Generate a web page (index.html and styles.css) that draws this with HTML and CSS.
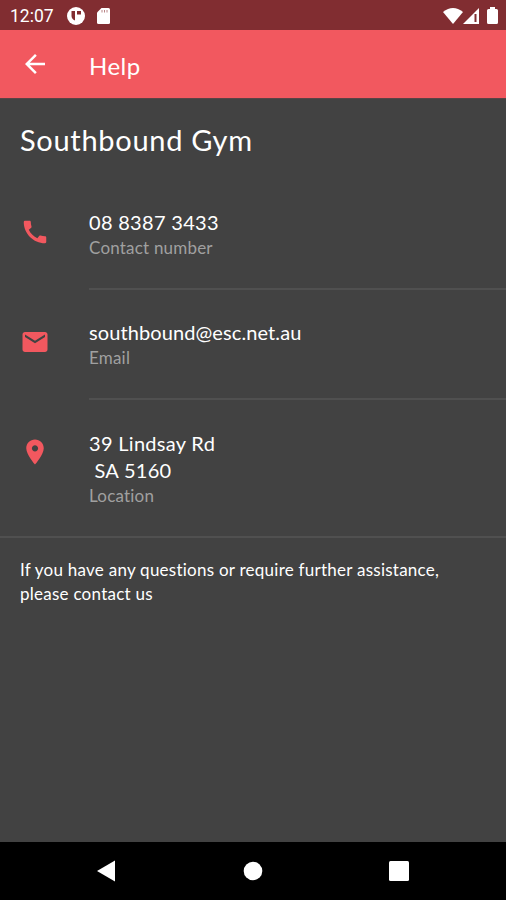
FILE: index.html
```html
<!DOCTYPE html>
<html lang="en">
	<head>
		<meta charset="UTF-8">
		<meta name="viewport" content="width=device-width, initial-scale=1.0">
		<title>Help</title>
		<link rel="stylesheet" href="styles.css">
	</head>
	<body>
		<div class="status-bar">
			<span class="status-time">12:07</span>
			<svg class="status-app" viewBox="0 0 18 18">
				<circle cx="9" cy="9" r="9" fill="#fff"/>
				<path d="M4.500 4h3.500v9.500a5 5 0 0 1-3.500-4.500z M10 4h4v3.500h-4z" fill="#812d31"/>
			</svg>
			<svg class="status-card" viewBox="0 0 13 16">
				<path d="M4.500 0H11.500a1.500 1.500 0 0 1 1.500 1.500v13a1.500 1.500 0 0 1-1.500 1.500h-10A1.500 1.500 0 0 1 0 14.500V4.500z" fill="#fff"/>
				<path d="M5 2v2.500M7.500 2v2.500M10 2v2.500" stroke="#b98486" stroke-width="1"/>
			</svg>
			<svg class="status-wifi" viewBox="0 0 20 16">
				<path d="M0 4Q10-4 20 4L10 16z" fill="#fff"/>
			</svg>
			<svg class="status-signal" viewBox="0 0 16 16">
				<path d="M16 0v16H0z" fill="#fff"/>
				<path d="M12.500 6v8" stroke="#812d31" stroke-width="2"/>
			</svg>
			<svg class="status-battery" viewBox="0 0 11 17">
				<path d="M3 0h5v2h1.500a1.500 1.500 0 0 1 1.500 1.500v12a1.500 1.500 0 0 1-1.500 1.500h-8A1.500 1.500 0 0 1 0 15.500v-12A1.500 1.500 0 0 1 1.500 2H3z" fill="#fff"/>
			</svg>
		</div>
		<header class="toolbar">
			<svg class="icon" viewBox="0 0 24 24"><path d="M20 11H7.830l5.590-5.590L12 4l-8 8 8 8 1.410-1.410L7.830 13H20v-2z"/></svg>
			<h1 class="toolbar-title">Help</h1>
		</header>
		<main class="content">
			<h2 class="gym-name">Southbound Gym</h2>
			<!--contact list-->
			<div class="contact">
				<svg class="icon" viewBox="0 0 24 24"><path d="M20.010 15.380c-1.230 0-2.420-.2-3.530-.56-.35-.12-.74-.03-1.010.24l-1.570 1.970c-2.830-1.350-5.480-3.900-6.890-6.830l1.950-1.660c.27-.28.35-.67.24-1.020-.37-1.110-.56-2.300-.56-3.530 0-.54-.45-.99-.99-.99H4.190C3.650 3 3 3.240 3 3.990 3 13.280 10.730 21 20.010 21c.71 0 .99-.63.99-1.180v-3.450c0-.54-.45-.99-.99-.99z"/></svg>
				<div class="contact-body">
					<p class="contact-value">08 8387 3433</p>
					<p class="contact-label">Contact number</p>
				</div>
			</div>
			<div class="contact">
				<svg class="icon" viewBox="0 0 24 24"><path d="M20 4H4c-1.100 0-1.990.9-1.990 2L2 18c0 1.100.9 2 2 2h16c1.100 0 2-.9 2-2V6c0-1.100-.9-2-2-2zm0 4l-8 5-8-5V6l8 5 8-5v2z"/></svg>
				<div class="contact-body">
					<p class="contact-value contact-email">southbound@esc.net.au</p>
					<p class="contact-label">Email</p>
				</div>
			</div>
			<div class="contact contact-last">
				<svg class="icon" viewBox="0 0 24 24"><path d="M12 2C8.130 2 5 5.130 5 9c0 5.250 7 13 7 13s7-7.750 7-13c0-3.870-3.130-7-7-7zm0 9.500c-1.380 0-2.500-1.120-2.500-2.500s1.120-2.500 2.500-2.500 2.500 1.120 2.500 2.500-1.120 2.500-2.500 2.500z"/></svg>
				<div class="contact-body">
					<p class="contact-value">39 Lindsay Rd
 SA 5160</p>
					<p class="contact-label">Location</p>
				</div>
			</div>
			<p class="note">If you have any questions or require further assistance,<br>please contact us</p>
		</main>
		<nav class="nav-bar">
			<svg viewBox="0 0 22 22"><path d="M2 11L20 .5v21z"/></svg>
			<svg viewBox="0 0 22 22"><circle cx="11" cy="11" r="9.300"/></svg>
			<svg viewBox="0 0 22 22"><rect x="1" y="1" width="20" height="20" rx="1.500"/></svg>
		</nav>
	</body>
</html>
```
FILE: styles.css
```css
*{
	margin:0;
	padding:0;
	box-sizing:border-box;
}
body{
	display:flex;
	flex-direction:column;
	height:900px;
	background:#424242;
	color:#fff;
	font-family:Lato,"Liberation Sans",sans-serif;
	font-variant-ligatures:none;
	overflow:hidden;
}
svg{
	flex-shrink:0;
}
.status-bar{
	display:flex;
	align-items:center;
	height:30px;
	padding:1px 8px 0 10px;
	background:#812d31;
}
.status-time{
	width:57px;
	font-family:Roboto,sans-serif;
	font-size:17.500px;
}
.status-app{
	width:18px;
	height:18px;
}
.status-card{
	width:13px;
	height:16px;
	margin-left:12px;
}
.status-wifi{
	width:20px;
	height:16px;
	margin-left:auto;
}
.status-signal{
	width:16px;
	height:16px;
}
.status-battery{
	width:11px;
	height:17px;
	margin-left:8px;
}
.toolbar{
	display:flex;
	align-items:center;
	height:69px;
	padding-left:20px;
	background:#f2585f;
	border-bottom:1px solid #5a4345;
}
.icon{
	width:30px;
	height:30px;
	margin-right:39px;
	fill:#f2585f;
}
.toolbar .icon{
	fill:#fff;
}
.toolbar-title{
	padding-top:4px;
	font-size:24px;
	font-weight:400;
	line-height:30px;
	letter-spacing:.5px;
}
.content{
	flex:1;
}
.gym-name{
	padding:23px 20px 0;
	font-size:29px;
	font-weight:400;
	line-height:36px;
	letter-spacing:.7px;
}
.contact{
	display:flex;
	align-items:center;
	height:110px;
	padding-left:20px;
}
.contact .icon{
	margin-bottom:6px;
}
.contact:first-of-type{
	margin-top:22px;
}
.contact-body{
	display:flex;
	flex-direction:column;
	justify-content:center;
	flex:1;
	height:110px;
	border-bottom:2px solid #505050;
}
.contact-value{
	font-size:20px;
	line-height:27px;
	letter-spacing:.3px;
	white-space:pre;
}
.contact-email{
	letter-spacing:.1px;
}
.contact-label{
	color:#a0a0a0;
	font-size:17px;
	line-height:23px;
	letter-spacing:.2px;
}
.contact-last{
	height:138px;
	border-bottom:2px solid #505050;
}
.contact-last .contact-body{
	border-bottom:0;
}
.contact-last .icon{
	margin-bottom:32px;
}
.note{
	padding:20px 20px 0;
	font-size:17px;
	line-height:24px;
	letter-spacing:.25px;
}
.nav-bar{
	display:flex;
	justify-content:space-between;
	align-items:center;
	height:58px;
	padding:0 96px 0 95px;
	background:#000;
}
.nav-bar svg{
	width:22px;
	height:22px;
	fill:#fff;
}
```
